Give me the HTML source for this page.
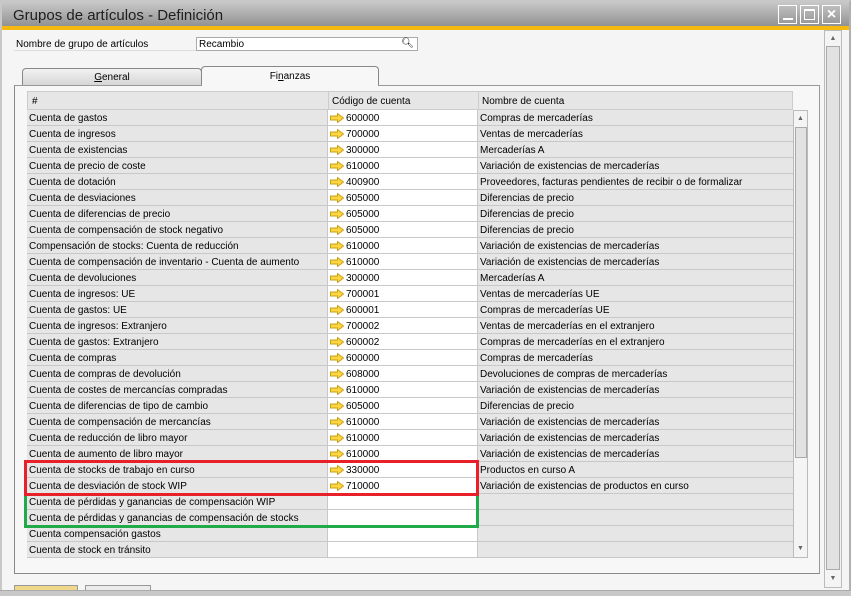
<!DOCTYPE html>
<html><head><meta charset="utf-8"><style>
*{margin:0;padding:0;box-sizing:border-box}
body{width:851px;height:596px;overflow:hidden;background:#f5f5f5;font-family:"Liberation Sans",sans-serif;font-size:10px;color:#000;position:relative}
.a{position:absolute}
.win{left:0;top:0;width:851px;height:596px;border:2px solid #c8c8c8;border-right-color:#b0b0b0}
.title{left:2px;top:2px;width:847px;height:24px;background:linear-gradient(#c8c8c8,#929292);font-size:15px;padding:5px 0 0 11px;color:#1e1e1e}
.orange{left:2px;top:26px;width:847px;height:4px;background:#f5b90f}
.wb{top:5px;width:19px;height:19px;border:1px solid #fff;background:linear-gradient(#bdbdbd,#9a9a9a)}
.row{position:absolute;left:27px;width:766px;height:16px;border-bottom:1px solid #c8c8c8}
.row div{position:absolute;top:0;height:15px;line-height:17px;white-space:nowrap;overflow:hidden}
.c1{left:0;width:301px;background:#e6e6e6;padding-left:2px;border-right:1px solid #c8c8c8}
.c2{left:301px;width:150px;background:#fff;padding-left:18px;border-right:1px solid #c8c8c8}
.c3{left:451px;width:315px;background:#e6e6e6;padding-left:2px}
.ar{position:absolute;left:2px;top:3px;width:14px;height:10px}
</style></head><body>
<div class="a win"></div>
<div class="a title">Grupos de artículos - Definición</div>
<div class="a orange"></div>
<div class="a wb" style="left:778px"><div class="a" style="left:4px;top:12px;width:10px;height:2px;background:#fff"></div></div>
<div class="a wb" style="left:800px"><div class="a" style="left:3px;top:3px;width:11px;height:11px;border:1px solid #fff;border-top-width:2px"></div></div>
<div class="a wb" style="left:822px;color:#fff;font-size:16px;font-weight:bold;text-align:center;line-height:17px">×</div>

<div class="a" style="left:14px;top:36px;width:404px;height:15px;border-bottom:1px solid #ddd"></div>
<div class="a" style="left:16px;top:39px">Nombre de grupo de artículos</div>
<div class="a" style="left:196px;top:37px;width:222px;height:14px;background:#fff;border:1px solid #aaa;padding:1px 0 0 2px">Recambio<span class="a" style="right:3px;top:0">🔍︎</span></div>

<div class="a" style="left:22px;top:68px;width:180px;height:17px;background:linear-gradient(#f2f2f2,#d6d6d6);border:1px solid #888;border-bottom:none;border-radius:4px 4px 0 0;text-align:center;line-height:17px"><u>G</u>eneral</div>
<div class="a" style="left:201px;top:66px;width:178px;height:20px;background:#f7f7f7;border:1px solid #888;border-bottom:none;border-radius:4px 4px 0 0;text-align:center;line-height:20px">Fi<u>n</u>anzas</div>
<div class="a" style="left:14px;top:85px;width:806px;height:489px;border:1px solid #888;border-top-color:#999;border-right-color:#999;background:#f7f7f7"></div>
<div class="a" style="left:202px;top:84px;width:176px;height:3px;background:#f7f7f7"></div>

<div class="a" style="left:27px;top:91px;width:766px;height:19px;background:#e6e6e6;border:1px solid #ccc">
<div class="a" style="left:4px;top:4px">#</div>
<div class="a" style="left:300px;top:0;width:1px;height:18px;background:#ccc"></div>
<div class="a" style="left:304px;top:4px">Código de cuenta</div>
<div class="a" style="left:450px;top:0;width:1px;height:18px;background:#ccc"></div>
<div class="a" style="left:454px;top:4px">Nombre de cuenta</div>
</div>

<svg width="0" height="0" style="position:absolute"><defs><symbol id="arr" viewBox="0 0 14 10"><path d="M0.5 3H7.5V0.5L13.5 5L7.5 9.5V7H0.5Z" fill="#fbd640" stroke="#c9a21a" stroke-width="1"/></symbol></defs></svg>

<div class="row" style="top:110px"><div class="c1">Cuenta de gastos</div><div class="c2"><svg class="ar"><use href="#arr"/></svg>600000</div><div class="c3">Compras de mercaderías</div></div>
<div class="row" style="top:126px"><div class="c1">Cuenta de ingresos</div><div class="c2"><svg class="ar"><use href="#arr"/></svg>700000</div><div class="c3">Ventas de mercaderías</div></div>
<div class="row" style="top:142px"><div class="c1">Cuenta de existencias</div><div class="c2"><svg class="ar"><use href="#arr"/></svg>300000</div><div class="c3">Mercaderías A</div></div>
<div class="row" style="top:158px"><div class="c1">Cuenta de precio de coste</div><div class="c2"><svg class="ar"><use href="#arr"/></svg>610000</div><div class="c3">Variación de existencias de mercaderías</div></div>
<div class="row" style="top:174px"><div class="c1">Cuenta de dotación</div><div class="c2"><svg class="ar"><use href="#arr"/></svg>400900</div><div class="c3">Proveedores, facturas pendientes de recibir o de formalizar</div></div>
<div class="row" style="top:190px"><div class="c1">Cuenta de desviaciones</div><div class="c2"><svg class="ar"><use href="#arr"/></svg>605000</div><div class="c3">Diferencias de precio</div></div>
<div class="row" style="top:206px"><div class="c1">Cuenta de diferencias de precio</div><div class="c2"><svg class="ar"><use href="#arr"/></svg>605000</div><div class="c3">Diferencias de precio</div></div>
<div class="row" style="top:222px"><div class="c1">Cuenta de compensación de stock negativo</div><div class="c2"><svg class="ar"><use href="#arr"/></svg>605000</div><div class="c3">Diferencias de precio</div></div>
<div class="row" style="top:238px"><div class="c1">Compensación de stocks: Cuenta de reducción</div><div class="c2"><svg class="ar"><use href="#arr"/></svg>610000</div><div class="c3">Variación de existencias de mercaderías</div></div>
<div class="row" style="top:254px"><div class="c1">Cuenta de compensación de inventario - Cuenta de aumento</div><div class="c2"><svg class="ar"><use href="#arr"/></svg>610000</div><div class="c3">Variación de existencias de mercaderías</div></div>
<div class="row" style="top:270px"><div class="c1">Cuenta de devoluciones</div><div class="c2"><svg class="ar"><use href="#arr"/></svg>300000</div><div class="c3">Mercaderías A</div></div>
<div class="row" style="top:286px"><div class="c1">Cuenta de ingresos: UE</div><div class="c2"><svg class="ar"><use href="#arr"/></svg>700001</div><div class="c3">Ventas de mercaderías UE</div></div>
<div class="row" style="top:302px"><div class="c1">Cuenta de gastos: UE</div><div class="c2"><svg class="ar"><use href="#arr"/></svg>600001</div><div class="c3">Compras de mercaderías UE</div></div>
<div class="row" style="top:318px"><div class="c1">Cuenta de ingresos: Extranjero</div><div class="c2"><svg class="ar"><use href="#arr"/></svg>700002</div><div class="c3">Ventas de mercaderías en el extranjero</div></div>
<div class="row" style="top:334px"><div class="c1">Cuenta de gastos: Extranjero</div><div class="c2"><svg class="ar"><use href="#arr"/></svg>600002</div><div class="c3">Compras de mercaderías en el extranjero</div></div>
<div class="row" style="top:350px"><div class="c1">Cuenta de compras</div><div class="c2"><svg class="ar"><use href="#arr"/></svg>600000</div><div class="c3">Compras de mercaderías</div></div>
<div class="row" style="top:366px"><div class="c1">Cuenta de compras de devolución</div><div class="c2"><svg class="ar"><use href="#arr"/></svg>608000</div><div class="c3">Devoluciones de compras de mercaderías</div></div>
<div class="row" style="top:382px"><div class="c1">Cuenta de costes de mercancías compradas</div><div class="c2"><svg class="ar"><use href="#arr"/></svg>610000</div><div class="c3">Variación de existencias de mercaderías</div></div>
<div class="row" style="top:398px"><div class="c1">Cuenta de diferencias de tipo de cambio</div><div class="c2"><svg class="ar"><use href="#arr"/></svg>605000</div><div class="c3">Diferencias de precio</div></div>
<div class="row" style="top:414px"><div class="c1">Cuenta de compensación de mercancías</div><div class="c2"><svg class="ar"><use href="#arr"/></svg>610000</div><div class="c3">Variación de existencias de mercaderías</div></div>
<div class="row" style="top:430px"><div class="c1">Cuenta de reducción de libro mayor</div><div class="c2"><svg class="ar"><use href="#arr"/></svg>610000</div><div class="c3">Variación de existencias de mercaderías</div></div>
<div class="row" style="top:446px"><div class="c1">Cuenta de aumento de libro mayor</div><div class="c2"><svg class="ar"><use href="#arr"/></svg>610000</div><div class="c3">Variación de existencias de mercaderías</div></div>
<div class="row" style="top:462px"><div class="c1">Cuenta de stocks de trabajo en curso</div><div class="c2"><svg class="ar"><use href="#arr"/></svg>330000</div><div class="c3">Productos en curso A</div></div>
<div class="row" style="top:478px"><div class="c1">Cuenta de desviación de stock WIP</div><div class="c2"><svg class="ar"><use href="#arr"/></svg>710000</div><div class="c3">Variación de existencias de productos en curso</div></div>
<div class="row" style="top:494px"><div class="c1">Cuenta de pérdidas y ganancias de compensación WIP</div><div class="c2"></div><div class="c3"></div></div>
<div class="row" style="top:510px"><div class="c1">Cuenta de pérdidas y ganancias de compensación de stocks</div><div class="c2"></div><div class="c3"></div></div>
<div class="row" style="top:526px"><div class="c1">Cuenta compensación gastos</div><div class="c2"></div><div class="c3"></div></div>
<div class="row" style="top:542px"><div class="c1">Cuenta de stock en tránsito</div><div class="c2"></div><div class="c3"></div></div>

<div class="a" style="left:24px;top:460px;width:455px;height:36px;border:3px solid #e8202a"></div>
<div class="a" style="left:24px;top:496px;width:455px;height:32px;border:3px solid #22a94a;border-top:none"></div>

<div class="a" style="left:793px;top:110px;width:15px;height:448px;background:#f4f4f4;border:1px solid #bbb"></div>
<div class="a" style="left:794px;top:111px;width:13px;height:15px;color:#666;font-size:7px;text-align:center;line-height:15px">▲</div>
<div class="a" style="left:795px;top:127px;width:12px;height:331px;background:#e2e2e2;border:1px solid #aaa"></div>
<div class="a" style="left:794px;top:541px;width:13px;height:15px;color:#666;font-size:7px;text-align:center;line-height:15px">▼</div>

<div class="a" style="left:824px;top:30px;width:18px;height:558px;background:#f4f4f4;border:1px solid #bbb"></div>
<div class="a" style="left:825px;top:31px;width:16px;height:15px;color:#666;font-size:7px;text-align:center;line-height:15px">▲</div>
<div class="a" style="left:826px;top:46px;width:14px;height:524px;background:#e2e2e2;border:1px solid #aaa"></div>
<div class="a" style="left:825px;top:571px;width:16px;height:15px;color:#666;font-size:7px;text-align:center;line-height:15px">▼</div>

<div class="a" style="left:14px;top:585px;width:64px;height:6px;background:#f0d88a;border:1px solid #999;border-bottom:none"></div>
<div class="a" style="left:85px;top:585px;width:66px;height:6px;background:#ececec;border:1px solid #999;border-bottom:none"></div>
<div class="a" style="left:0;top:590px;width:851px;height:6px;background:#c8c8c8;border-top:1px solid #aaa"></div>
</body></html>
